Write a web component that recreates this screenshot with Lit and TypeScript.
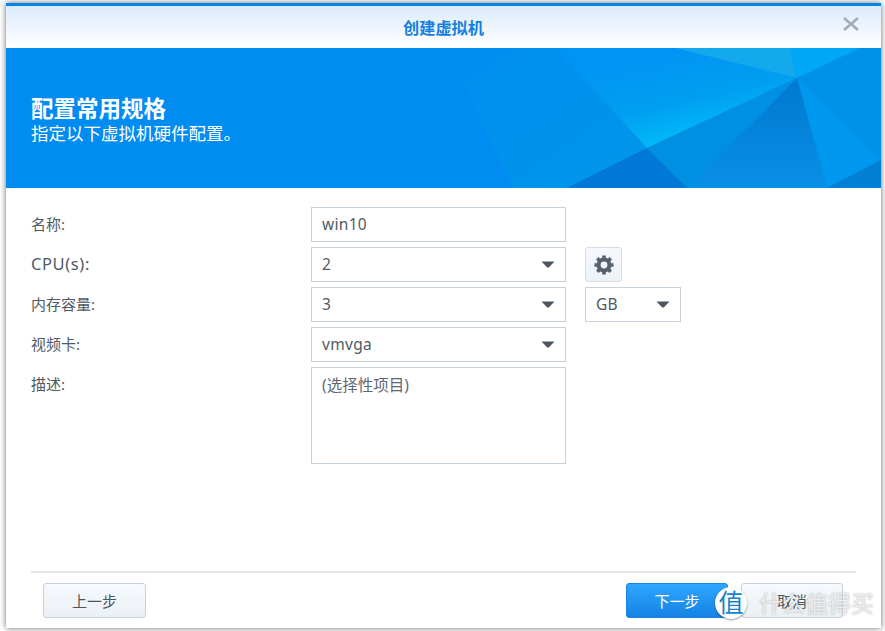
import { LitElement, html, css, svg } from "lit";
import { customElement } from "lit/decorators.js";

const arrow = html`<svg class="arrow" width="14" height="7" viewBox="0 0 14 7"><path d="M0.5 0.5H13.5L8 6.2Q7 7 6 6.2Z" fill="#4b5661"/></svg>`;

@customElement("app-root")
export class AppRoot extends LitElement {
  static styles = css`
    :host { display: block; width: 885px; height: 631px; overflow: hidden; background: #fff; position: relative;
      font-family: "Noto Sans", "Noto Sans CJK SC", sans-serif; color: #505a64; font-size: 15px; }
    .page { box-sizing: border-box; width: 885px; height: 631px; padding: 3px 4px 3px 6px; display: flex; }
    .window { flex: 1; display: flex; flex-direction: column; background: #fff; box-shadow: 0 0 6px rgba(0,0,0,.6); min-width: 0; }
    .title { box-sizing: border-box; height: 45px; border-top: 3px solid #0086e3; background: linear-gradient(#dbebfb, #ffffff);
      display: flex; align-items: center; justify-content: center; position: relative; color: #1480e0; font-weight: 700; font-size: 16.2px; }
    .close { position: absolute; right: 21px; top: 10px; }
    .banner { height: 140px; position: relative; background: #008cf0; color: #fff; display: flex; flex-direction: column; justify-content: center; padding: 2px 25px 0; box-sizing: border-box; overflow: hidden; }
    .banner svg { position: absolute; inset: 0; }
    .banner h1 { position: relative; margin: 0; font-size: 22.5px; line-height: 27px; font-weight: 700; }
    .banner p { position: relative; margin: 0; font-size: 17.5px; line-height: 22px; }
    .form { flex: 1; padding: 19px 25px 0; display: flex; flex-direction: column; gap: 5px; }
    .row { display: flex; align-items: flex-start; }
    .label { width: 280px; line-height: 34px; flex: none; }
    .latin { font-size: 16.5px; letter-spacing: .6px; }
    .field { box-sizing: border-box; width: 255px; height: 35px; border: 1px solid #c8d2dd; padding: 0 10px 2px; display: flex; align-items: center; justify-content: space-between; font-size: 15.5px; letter-spacing: .3px; }
    .arrow { flex: none; margin-top: 2px; }
    .area { height: 97px; align-items: flex-start; padding-top: 4px; color: #5e6873; font-size: 15.5px; line-height: 27px; letter-spacing: 0; }
    .side { margin-left: 19px; }
    .gear { box-sizing: border-box; width: 37px; height: 35px; border: 1px solid #d5dee8; border-radius: 3px; background: linear-gradient(#f5f9fd, #edf2f7); display: flex; align-items: center; justify-content: center; }
    .unit { width: 96px; }
    .foot { box-sizing: border-box; margin: 0 25px; height: 57px; border-top: 2px solid #e3e5e7; padding: 10px 13px 0 12px; display: flex; justify-content: space-between; }
    .btns { display: flex; gap: 13px; }
    .btn { box-sizing: border-box; height: 35px; width: 103px; border: 1px solid #c6d1de; border-radius: 3px; background: linear-gradient(#f6fafe, #ebf0f5); display: flex; align-items: center; justify-content: center; font-size: 15px; color: #4c5660; }
    .btns .btn { width: 102px; }
    .btn.primary { border-color: #1c86df; background: linear-gradient(#2ea6ff, #1583e5); color: #fff; }
    .mark { position: absolute; left: 715px; top: 587px; display: flex; align-items: center; gap: 12px; }
    .badge { width: 32px; height: 32px; border-radius: 50%; background: #fff; box-shadow: 0 1px 2px rgba(0,0,0,.4); color: #1583c8; font-size: 25px; line-height: 31px; text-align: center; }
    .brand { font-size: 23px; color: #ececec; text-shadow: 0 0 2px rgba(90,90,90,.5); line-height: 32px; }
  `;

  gear() {
    const teeth = [0, 45, 90, 135, 180, 225, 270, 315].map(
      (a) => svg`<rect x="8.2" y="0.5" width="3.6" height="4" transform="rotate(${a} 10 10)" />`
    );
    return html`<svg width="20" height="20" viewBox="0 0 20 20" fill="#56616c">${teeth}<circle cx="10" cy="10" r="5.4" fill="none" stroke="#56616c" stroke-width="4"/></svg>`;
  }

  render() {
    return html`
      <div class="page">
        <div class="window">
          <div class="title">创建虚拟机
            <svg class="close" width="18" height="16" viewBox="0 0 18 16"><path d="M2 2L16 14M16 2L2 14" stroke="#a3abb3" stroke-width="2.6" fill="none"/></svg>
          </div>
          <div class="banner">
            <svg width="875" height="140" viewBox="0 0 875 140">
              <defs>
                <linearGradient id="g1" gradientUnits="userSpaceOnUse" x1="620" y1="10" x2="640" y2="98"><stop offset="0" stop-color="#0094f5"/><stop offset="0.6" stop-color="#009ff0"/><stop offset="1" stop-color="#00b8f8"/></linearGradient>
                <linearGradient id="g2" x1="0" y1="0" x2="0" y2="1"><stop offset="0" stop-color="#0078d0"/><stop offset="1" stop-color="#0890e4"/></linearGradient>
                <linearGradient id="g3" x1="0" y1="0" x2="1" y2="1"><stop offset="0" stop-color="#008ef1"/><stop offset="1" stop-color="#0096ea"/></linearGradient>
              </defs>
              <polygon points="439,0 549,0 641,100 561,140 507,140" fill="url(#g3)"/>
              <polygon points="549,0 669,0 791,30 641,100" fill="url(#g1)"/>
              <polygon points="669,0 784,0 791,30" fill="#14a8ec"/>
              <polygon points="784,0 854,0 791,30" fill="#00a8f6"/>
              <polygon points="854,0 875,0 875,112 791,30" fill="#0092e8"/>
              <polygon points="791,30 875,112 821,140" fill="#0097ee"/>
              <polygon points="821,140 875,112 875,140" fill="#0080d4"/>
              <polygon points="791,30 821,140 681,140" fill="url(#g2)"/>
              <polygon points="791,30 681,140 641,100" fill="#0090e2"/>
              <polygon points="641,100 681,140 561,140" fill="#0078d8"/>
            </svg>
            <h1>配置常用规格</h1>
            <p>指定以下虚拟机硬件配置。</p>
          </div>
          <div class="form">
            <div class="row"><div class="label">名称:</div><div class="field">win10</div></div>
            <div class="row"><div class="label latin">CPU(s):</div><div class="field">2${arrow}</div><div class="gear side">${this.gear()}</div></div>
            <div class="row"><div class="label">内存容量:</div><div class="field">3${arrow}</div><div class="field unit side">GB${arrow}</div></div>
            <div class="row"><div class="label">视频卡:</div><div class="field">vmvga${arrow}</div></div>
            <div class="row"><div class="label">描述:</div><div class="field area">(选择性项目)</div></div>
          </div>
          <div class="foot">
            <div class="btn">上一步</div>
            <div class="btns"><div class="btn primary">下一步</div><div class="btn">取消</div></div>
          </div>
        </div>
      </div>
      <div class="mark"><div class="badge">值</div><div class="brand">什么值得买</div></div>
    `;
  }
}
